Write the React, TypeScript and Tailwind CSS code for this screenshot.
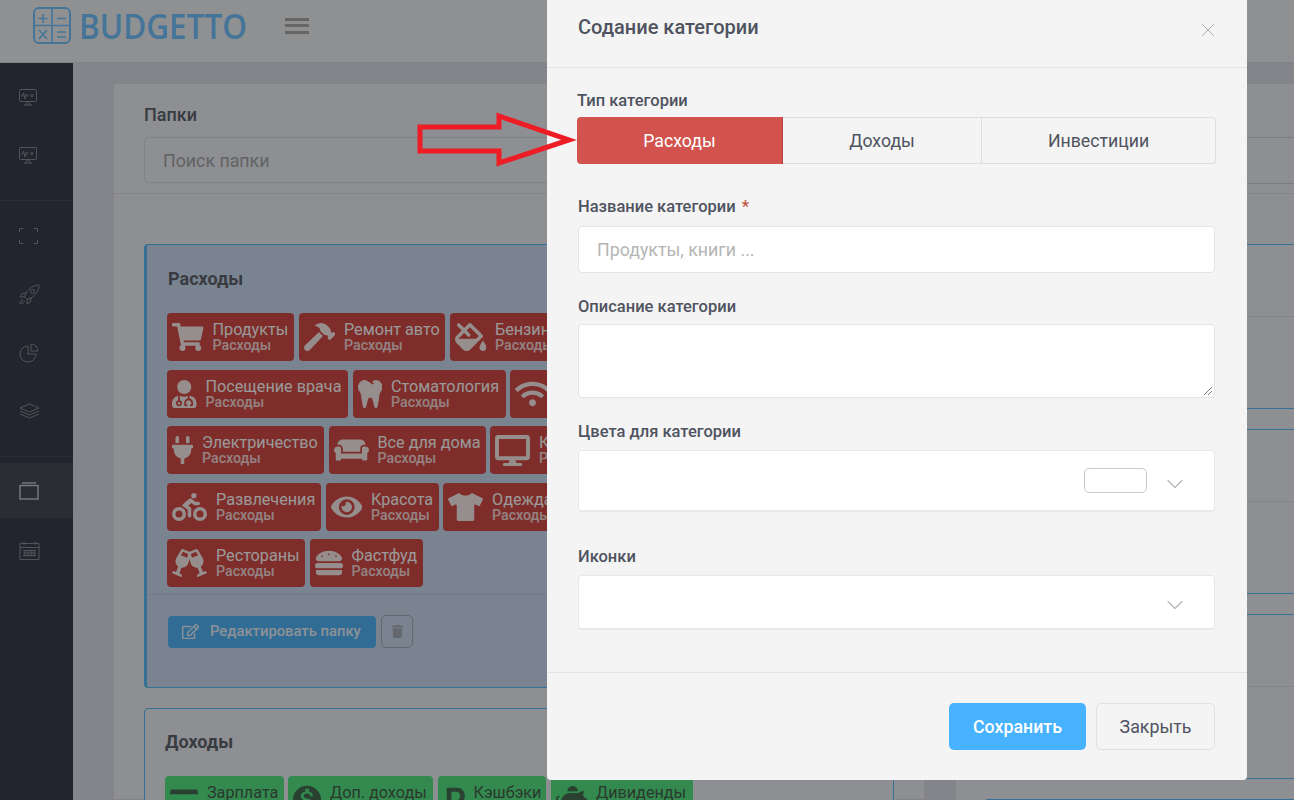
import { FaShoppingCart, FaHammer, FaFillDrip, FaUserMd, FaTooth, FaWifi, FaPlug, FaCouch, FaDesktop, FaBiking, FaEye, FaTshirt, FaGlassCheers, FaHamburger, FaRegEdit, FaTrash, FaCreditCard, FaRubleSign, FaPiggyBank } from "react-icons/fa";
import { MdMonetizationOn } from "react-icons/md";
import { ChevronDown, X } from "lucide-react";
import type { ReactNode } from "react";

type Tag = { name: string; sub: string; icon: ReactNode; width: string };

const rows: Tag[][] = [
    [
        { name: "Продукты", sub: "Расходы", icon: <FaShoppingCart className="h-[28px] w-[31.5px]" />, width: "w-[127px]" },
        { name: "Ремонт авто", sub: "Расходы", icon: <FaHammer className="h-[28px] w-[31.5px]" />, width: "w-[146.5px]" },
        { name: "Бензин", sub: "Расходы", icon: <FaFillDrip className="h-[28px] w-[31.5px]" />, width: "w-[130px]" },
    ],
    [
        { name: "Посещение врача", sub: "Расходы", icon: <FaUserMd className="h-[28px] w-[24.5px]" />, width: "w-[181px]" },
        { name: "Стоматология", sub: "Расходы", icon: <FaTooth className="h-[28px] w-[24.5px]" />, width: "w-[153px]" },
        { name: "Интернет", sub: "Расходы", icon: <FaWifi className="h-[28px] w-[35px]" />, width: "w-[130px]" },
    ],
    [
        { name: "Электричество", sub: "Расходы", icon: <FaPlug className="h-[28px] w-[21px]" />, width: "w-[157px]" },
        { name: "Все для дома", sub: "Расходы", icon: <FaCouch className="h-[28px] w-[35px]" />, width: "w-[157px]" },
        { name: "Кино", sub: "Расходы", icon: <FaDesktop className="h-[31px] w-[35px]" />, width: "w-[130px]" },
    ],
    [
        { name: "Развлечения", sub: "Расходы", icon: <FaBiking className="h-[28px] w-[35px]" />, width: "w-[154px]" },
        { name: "Красота", sub: "Расходы", icon: <FaEye className="h-[28px] w-[31.5px]" />, width: "w-[113px]" },
        { name: "Одежда", sub: "Расходы", icon: <FaTshirt className="h-[28px] w-[35px]" />, width: "w-[130px]" },
    ],
    [
        { name: "Рестораны", sub: "Расходы", icon: <FaGlassCheers className="h-[28px] w-[35px]" />, width: "w-[138px]" },
        { name: "Фастфуд", sub: "Расходы", icon: <FaHamburger className="h-[28px] w-[28px]" />, width: "w-[113px]" },
    ],
];

const incomes: Tag[] = [
    { name: "Зарплата", sub: "Доходы", icon: <FaCreditCard className="h-[25px] w-[28px]" />, width: "w-[118.5px]" },
    { name: "Доп. доходы", sub: "Доходы", icon: <MdMonetizationOn size={34} className="-mx-[3px]" />, width: "w-[145px]" },
    { name: "Кэшбэки", sub: "Доходы", icon: <FaRubleSign className="h-[29px] w-[22px]" />, width: "w-[108.5px]" },
    { name: "Дивиденды", sub: "Доходы", icon: <FaPiggyBank className="h-[28px] w-[31.5px]" />, width: "w-[142.5px]" },
];

function MonitorIcon() {
    return (
        <svg width="18" height="17" viewBox="0 0 18 17" fill="none" stroke="#8a8d94" strokeWidth="1">
            <rect x="0.5" y="0.5" width="17" height="12" rx="1" />
            <path d="M2 7h1.500l1-3 1.500 6 1.500-5 1 2h1M11.500 6.500l1.500-1.500 1.500 1.500-1.500 1.500zM6 16l3-3.500 3 3.500M5 16h8" />
        </svg>
    );
}

function SideItem({ children, active }: { children: ReactNode; active?: boolean }) {
    return <div className={`flex items-center pl-[19px] ${active ? "h-[55px] bg-[#464b57]" : "h-[58px]"}`}>{children}</div>;
}

function TagChip({ tag, className }: { tag: Tag; className: string }) {
    return (
        <div className={`flex h-12 shrink-0 items-center gap-[9px] overflow-hidden rounded pl-[5px] ${tag.width} ${className}`}>
            <span className="shrink-0 opacity-90">{tag.icon}</span>
            <div className="whitespace-nowrap">
                <div className="text-[16.2px] leading-[17px]">{tag.name}</div>
                <div className="text-[14.2px] leading-[15px] font-medium opacity-80">{tag.sub}</div>
            </div>
        </div>
    );
}

function ModalField({ label, required, className, labelClass, children }: { label: string; required?: boolean; className: string; labelClass: string; children: ReactNode }) {
    return (
        <div className={className}>
            <div className={`pt-px text-[16.5px] leading-[18px] font-medium ${labelClass}`}>
                {label}
                {required && <span className="ml-[6px] text-[#c0543f]">*</span>}
            </div>
            {children}
        </div>
    );
}

export default function App() {
    return (
        <div className="relative h-[800px] overflow-hidden bg-[#dcdee6] font-['Roboto',sans-serif]">
            {/* header */}
            <div className="flex h-[63px] items-center border-b border-[#d8d9dd] bg-[#eff0f4] pb-[11px] pl-[33px]">
                <svg width="38" height="37" viewBox="0 0 38 37" fill="none" stroke="#72c4ff" strokeWidth="1.600">
                    <rect x="1" y="1" width="36" height="35" rx="5" strokeWidth="2" />
                    <path d="M19 1v35M1 18.500h36M10 7v9M5.500 11.500h9M24 11.500h9M6 23l8 9M14 23l-8 9M24 25h9M24 30h9" />
                </svg>
                <span className="ml-[8px] w-[166px] origin-left scale-x-[0.9] font-['Open_Sans',sans-serif] text-[35px] leading-none font-semibold whitespace-nowrap text-[#72c4ff]">BUDGETTO</span>
                <div className="ml-[40px] flex w-6 flex-col gap-[3.5px]">
                    <span className="h-[3px] bg-[#aaa]" />
                    <span className="h-[3px] bg-[#aaa]" />
                    <span className="h-[3px] bg-[#aaa]" />
                </div>
            </div>

            <div className="flex h-[737px]">
                {/* sidebar */}
                <aside className="w-[73px] shrink-0 bg-[#3a3f4d] pt-[5px]">
                    <SideItem><MonitorIcon /></SideItem>
                    <SideItem><MonitorIcon /></SideItem>
                    <div className="mt-[16px] border-t border-[#484c5a] pt-[6px]">
                        <SideItem>
                            <svg width="19" height="16" viewBox="0 0 19 16" fill="none" stroke="#8a8d94" strokeWidth="1">
                                <path d="M.5 4V.5h4M14.500.5h4V4M18.500 12v3.500h-4M4.500 15.500H.5V12" />
                            </svg>
                        </SideItem>
                        <SideItem>
                            <svg width="21" height="21" viewBox="0 0 21 21" fill="none" stroke="#8a8d94" strokeWidth="1">
                                <path d="M20 1C15 1 10 4 7 9L5.500 13 8 15.500 12 14C17 11 20 6 20 1ZM7 9 3 9.500 1 13 5.500 12.500M12 14 11.500 18 8 20 8.500 15.500M4 15.500C2.500 16 1.500 17.500 1 20 3.500 19.500 5 18.500 5.500 17" />
                                <circle cx="13.500" cy="7.500" r="2" />
                            </svg>
                        </SideItem>
                        <SideItem>
                            <svg className="mt-[2px]" width="20" height="20" viewBox="0 0 20 20" fill="none" stroke="#8a8d94" strokeWidth="1">
                                <path d="M9 3a8 8 0 1 0 8 8H9zM12 1v7h7a7 7 0 0 0-7-7z" />
                            </svg>
                        </SideItem>
                        <SideItem>
                            <svg className="mt-[2px]" width="21" height="16" viewBox="0 0 21 16" fill="none" stroke="#8a8d94" strokeWidth="1">
                                <path d="M10.500 1 20 5l-9.500 4L1 5zM1 8l9.500 4L20 8M1 11l9.500 4L20 11" />
                            </svg>
                        </SideItem>
                    </div>
                    <div className="mt-[17px] border-t border-[#484c5a] pt-[6px]">
                        <SideItem active>
                            <svg width="20" height="18" viewBox="0 0 20 18" fill="none" stroke="#d8d8dc" strokeWidth="1.300">
                                <rect x="1" y="3.500" width="18" height="13.500" />
                                <path d="M3 1h14" />
                            </svg>
                        </SideItem>
                        <div className="mt-[3px]">
                            <SideItem>
                                <svg width="21" height="19" viewBox="0 0 21 19" fill="none" stroke="#8a8d94" strokeWidth="1">
                                    <path d="M1 2.500h19V18.500H1zM1 6.500h19M5 .5v3.500M16 .5v3.500M4 9.500h13M4 12h13M4 14.500h13M6 9v6.500M9 9v6.500M12 9v6.500M15 9v6.500" />
                                </svg>
                            </SideItem>
                        </div>
                    </div>
                </aside>

                {/* content */}
                <main className="flex min-w-0 flex-1 gap-[30px] pt-5 pl-10 text-[#5f636e]">
                    <section className="w-[812px] shrink-0 rounded-t border border-[#dcdde1] bg-[#eceef3]">
                        <div className="border-b border-[#dcdde1] px-[30px] pt-[20px] pb-[10px]">
                            <div className="text-[18px] leading-[22px] font-medium">Папки</div>
                            <div className="mt-[11px] flex h-[46px] items-center rounded-[5px] border border-[#d8d9de] pt-[2px] pl-[18px] text-[17.8px] text-[#a4a5a9]">Поиск папки</div>
                        </div>
                        <div className="px-[30px] pt-[50px]">
                            <div className="h-[444px] rounded border border-l-[3px] border-[#59bdf7] bg-[#cbdcf0]">
                                <div className="pt-[23px] pl-[21px] text-[18px] leading-[22px] font-bold">Расходы</div>
                                <div className="flex flex-col gap-[8.5px] overflow-hidden pt-[23px] pl-[20px]">
                                    {rows.map((row, i) => (
                                        <div key={i} className="flex gap-[4.5px]">
                                            {row.map((t) => (
                                                <TagChip key={t.name} tag={t} className="bg-[#d44b46] text-white" />
                                            ))}
                                        </div>
                                    ))}
                                </div>
                                <div className="mt-[7px] flex items-center gap-[5px] border-t border-[#bccbdc] pt-[20px] pl-[21px]">
                                    <div className="flex h-8 w-[208px] items-center gap-[11px] rounded bg-[#53b4f8] pl-[14px] text-[14.800px] font-medium text-[#eaf2fa]">
                                        <FaRegEdit size={17} /> Редактировать папку
                                    </div>
                                    <div className="flex h-[33px] w-8 items-center justify-center rounded-[5px] border border-[#a3adb8] text-[#a3adb8]">
                                        <FaTrash size={13} />
                                    </div>
                                </div>
                            </div>
                            <div className="mt-[20px] rounded border border-[#59bdf7] bg-[#eceef3] pb-4">
                                <div className="px-[20px] pt-[22px] text-[18px] leading-[22px] font-bold">Доходы</div>
                                <div className="flex gap-[4.5px] pt-[23px] pl-[20px]">
                                    {incomes.map((t) => (
                                        <TagChip key={t.name} tag={t} className="bg-[#57e682] text-[#46604f]" />
                                    ))}
                                </div>
                            </div>
                        </div>
                    </section>
                    <section className="min-w-0 flex-1 border-t border-l border-[#dcdde1] bg-[#eceef3]">
                        <div className="h-[54px] border-b border-[#d0d1d6]" />
                        <div className="h-[46px] border-b border-[#d0d1d6]" />
                        <div className="h-[10px] border-b border-[#dcdde1]" />
                        <div className="flex flex-col gap-[20px] pt-[50px] pl-[30px]">
                            {[0, 1, 2, 3].map((i) => (
                                <div key={i} className="h-[165px] shrink-0 border-y border-[#59bdf7]">
                                    <div className="h-[72px] border-b border-[#dcdde1]" />
                                </div>
                            ))}
                        </div>
                    </section>
                </main>
            </div>

            {/* backdrop */}
            <div className="absolute inset-0 bg-black/40" />

            {/* modal */}
            <div className="absolute top-0 left-[547px] flex h-[780px] w-[700px] flex-col rounded-b bg-[#f4f4f4] text-[#4f5360]">
                <div className="flex h-[68px] shrink-0 items-start justify-between border-b border-[#e3e3e3] pr-[28px] pl-[31px]">
                    <div className="mt-[14px] text-[20px] leading-[26px] font-medium">Содание категории</div>
                    <X size={22} strokeWidth={1} className="mt-[19px] text-[#a8a8a8]" />
                </div>
                <div className="flex flex-1 flex-col pr-[31px] pl-[30px]">
                    <div className="mt-[23px] pt-px text-[16.5px] leading-[18px] font-medium">Тип категории</div>
                    <div className="mt-[7px] flex h-[47px] text-[17.700px]">
                        <div className="flex w-[206px] items-center justify-center rounded-l border-r border-[#b5423e] bg-[#d2534e] pt-[2px] text-white">Расходы</div>
                        <div className="flex w-[199px] items-center justify-center border-y border-r border-[#dedede] pt-[2px]">Доходы</div>
                        <div className="flex flex-1 items-center justify-center rounded-r border-y border-r border-[#dedede] pt-[2px]">Инвестиции</div>
                    </div>
                    <div className="mt-[33px] flex flex-col pr-px pl-px">
                        <ModalField label="Название категории" required className="" labelClass="mb-[10px]">
                            <div className="flex h-[47px] items-center rounded border border-[#e5e5e5] bg-white pt-[2px] pl-[18px] text-[17.800px] text-[#b5b5b5]">Продукты, книги ...</div>
                        </ModalField>
                        <ModalField label="Описание категории" className="mt-[24px]" labelClass="mb-[8px]">
                            <div className="relative h-[74px] rounded border border-[#e5e5e5] bg-white">
                                <svg className="absolute right-[1px] bottom-[1px]" width="10" height="10" viewBox="0 0 10 10" stroke="#777" strokeWidth="1">
                                    <path d="M1 9l8-8M5 9l4-4" />
                                </svg>
                            </div>
                        </ModalField>
                        <ModalField label="Цвета для категории" className="mt-[24px]" labelClass="mb-[9px]">
                            <div className="flex h-[62px] items-center justify-end rounded border border-b-2 border-[#e8e8e8] bg-white pr-[25px]">
                                <div className="h-[25px] w-[63px] rounded-[5px] border border-[#c9c9c9]" />
                                <ChevronDown size={28} strokeWidth={1} className="mt-[6px] ml-[14px] text-[#b5b5b5]" />
                            </div>
                        </ModalField>
                        <ModalField label="Иконки" className="mt-[35px]" labelClass="mb-[9px]">
                            <div className="flex h-[55px] items-center justify-end rounded border border-b-2 border-[#e8e8e8] bg-white pr-[25px]">
                                <ChevronDown size={28} strokeWidth={1} className="mt-[5px] text-[#b5b5b5]" />
                            </div>
                        </ModalField>
                    </div>
                </div>
                <div className="flex h-[108px] shrink-0 items-start justify-end gap-[10px] border-t border-[#e3e3e3] pt-[30px] pr-[32px]">
                    <div className="flex h-[47px] w-[137px] items-center justify-center rounded-[5px] bg-[#47b2ff] pt-[2px] text-[17.800px] font-medium text-white">Сохранить</div>
                    <div className="flex h-[47px] w-[119px] items-center justify-center rounded-[5px] border border-[#e0e0e0] pt-[2px] text-[17.800px]">Закрыть</div>
                </div>
            </div>

            {/* red arrow drawn over the screenshot */}
            <svg className="absolute top-[110px] left-[416px]" width="165" height="60" viewBox="0 0 165 60" fill="none" stroke="#ee1c25" strokeWidth="5">
                <path d="M4 17H83V6L153 30L83 53V41H4Z" />
            </svg>
        </div>
    );
}
